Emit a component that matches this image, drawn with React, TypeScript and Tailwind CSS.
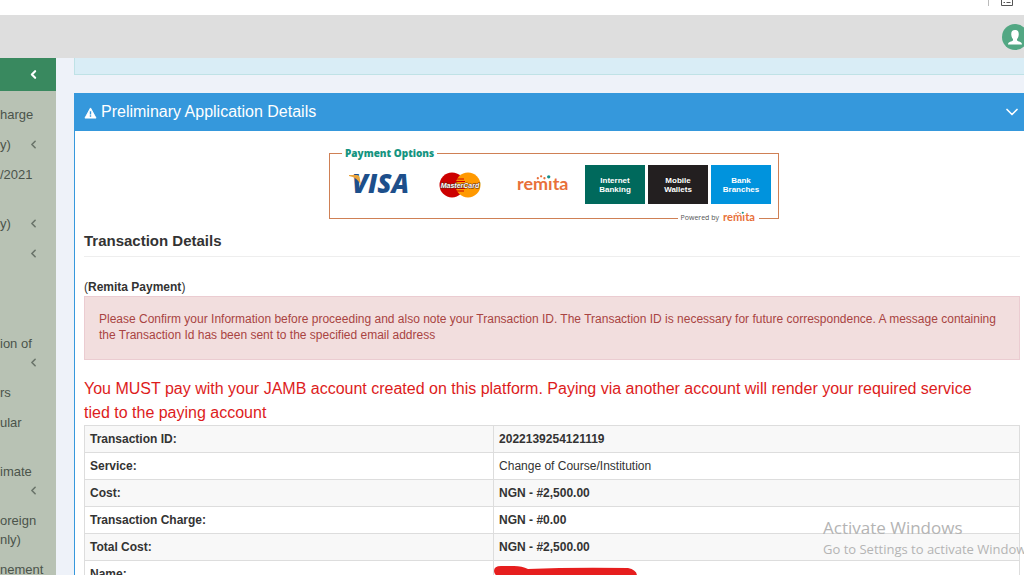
import * as React from "react";
import { ChevronDown, ChevronLeft } from "lucide-react";

const menu = [
  { lines: ["harge"] },
  { lines: ["y)"], arrow: true },
  { lines: ["/2021", ""] },
  { lines: ["y)"], arrow: true },
  { lines: [""], arrow: true },
  { lines: [""] },
  { lines: [""] },
  { lines: ["ion of", ""], arrow: true },
  { lines: ["rs"] },
  { lines: ["ular", ""] },
  { lines: ["imate", ""], arrow: true },
  { lines: ["oreign", "nly)"] },
  { lines: ["nement"] },
];

const details = [
  { label: "Transaction ID:", value: "2022139254121119", bold: true },
  { label: "Service:", value: "Change of Course/Institution", bold: false },
  { label: "Cost:", value: "NGN - #2,500.00", bold: true },
  { label: "Transaction Charge:", value: "NGN - #0.00", bold: true },
  { label: "Total Cost:", value: "NGN - #2,500.00", bold: true },
];

const channels = [
  { top: "Internet", bottom: "Banking", color: "bg-[#00695c]" },
  { top: "Mobile", bottom: "Wallets", color: "bg-[#231f20]" },
  { top: "Bank", bottom: "Branches", color: "bg-[#0093dd]" },
];

const Visa = () => (
  <svg width="64" height="26" viewBox="0 0 64 26" role="img" aria-label="Visa">
    <text
      x="4"
      y="21"
      fill="#1d4f8b"
      fontFamily="Open Sans, sans-serif"
      fontSize="26"
      fontStyle="italic"
      fontWeight="800"
    >
      VISA
    </text>
    <path d="M1 3H9Q11 3 11.500 5L13 13Q9 5 1 4Z" fill="#eaa43c" />
  </svg>
);

const MasterCard = () => (
  <svg width="42" height="26" viewBox="0 0 42 26" role="img" aria-label="MasterCard">
    <circle cx="13" cy="13" r="12.500" fill="#cc0000" />
    <circle cx="29" cy="13" r="12.500" fill="#ff9900" />
    <path d="M17 7H25M16 9.500H26M16 16.500H26M17 19H25" stroke="#cc0000" />
    <text
      x="21"
      y="16"
      textAnchor="middle"
      fill="#fff"
      stroke="#5c2b1a"
      strokeWidth="1"
      paintOrder="stroke"
      fontFamily="Liberation Sans, sans-serif"
      fontSize="7"
      fontStyle="italic"
      fontWeight="700"
    >
      MasterCard
    </text>
  </svg>
);

const Remita = ({ width }: { width: number }) => (
  <svg width={width} viewBox="0 0 56 22" role="img" aria-label="remita">
    <text
      x="0"
      y="17"
      fill="#e8703a"
      fontFamily="Lato, sans-serif"
      fontSize="19"
      fontWeight="700"
    >
      remıta
    </text>
    <g fill="#e8703a">
      <circle cx="22" cy="4.500" r="1.200" />
      <circle cx="25.500" cy="2.500" r="1.200" />
      <circle cx="29" cy="4.500" r="1.200" />
    </g>
    <circle cx="33.500" cy="3" r="1.800" fill="#16908a" />
  </svg>
);

const Payment = () => (
  <div className="relative mx-auto mt-4 w-[450px] max-w-full translate-x-0.5">
    <fieldset className="h-[72px] border border-[#cf8055] pl-3">
      <legend className="px-[3px] font-['Open_Sans',sans-serif] text-[10px] leading-3 font-extrabold text-[#159480]">
        Payment Options
      </legend>
      <div className="flex items-center pt-1.5 pl-1.5">
        <Visa />
        <div className="ml-[27px]">
          <MasterCard />
        </div>
        <div className="ml-9 w-[68px]">
          <Remita width={53} />
        </div>
        <div className="flex gap-[3px]">
          {channels.map((c) => (
            <button
              key={c.top}
              type="button"
              className={`${c.color} h-[39px] w-[60px] text-[8px] leading-[9px] font-bold text-white`}
            >
              {c.top}
              <br />
              {c.bottom}
            </button>
          ))}
        </div>
      </div>
    </fieldset>
    <div className="absolute right-5 -bottom-[5px] flex items-center gap-1 bg-white px-[3px] font-['Open_Sans',sans-serif] text-[7px] leading-3 text-[#555]">
      Powered by
      <Remita width={33} />
    </div>
  </div>
);

const Sidebar = () => (
  <nav className="w-14 shrink-0 overflow-hidden bg-[#b8c2b4] text-[13px] leading-[19px] text-[#4b544b]">
    <button
      type="button"
      aria-label="Collapse menu"
      className="flex h-[33px] w-full items-center justify-end bg-[#39895f] pr-4 text-white"
    >
      <ChevronLeft size={13} strokeWidth={4} />
    </button>
    <ul className="pt-2">
      {menu.map((m, i) => (
        <li key={i} className="relative pt-[6px] pb-[5px]">
          {m.lines.map((line, j) => (
            <div key={j} className="h-[19px] whitespace-nowrap">
              {line}
            </div>
          ))}
          {m.arrow && (
            <ChevronLeft
              size={13}
              strokeWidth={3}
              className="absolute right-4 bottom-2 text-[#6a746a]"
            />
          )}
        </li>
      ))}
    </ul>
  </nav>
);

const Details = () => (
  <table className="w-full border-collapse text-[12px] leading-4 text-[#333]">
    <tbody>
      {details.map((d) => (
        <tr key={d.label} className="h-[27px] odd:bg-[#f8f8f8]">
          <th
            scope="row"
            className="w-7/16 border border-[#dddddd] px-[5px] text-left font-bold"
          >
            {d.label}
          </th>
          <td
            className={`border border-[#dddddd] px-[5px] ${d.bold ? "font-bold" : ""}`}
          >
            {d.value}
          </td>
        </tr>
      ))}
      <tr className="h-[27px]">
        <th
          scope="row"
          className="border border-[#dddddd] px-[5px] text-left font-bold"
        >
          Name:
        </th>
        <td className="border border-[#dddddd]">
          <svg width="143" height="18" viewBox="0 0 143 18">
            <path
              d="M0 6Q0 1 7 1H20Q28 1 34 4Q80 2 134 3Q143 5 143 11V18H16Q0 12 0 6Z"
              fill="#e61e1e"
            />
          </svg>
        </td>
      </tr>
    </tbody>
  </table>
);

export default function App() {
  return (
    <div className="relative flex h-screen flex-col overflow-hidden bg-[#eef2f9] font-['Liberation_Sans',Arial,sans-serif] text-[#333]">
      <div className="flex h-[15px] shrink-0 items-start justify-end gap-3 bg-white pr-[11px]">
        <div className="h-[6px] w-px bg-[#bbb]" />
        <svg width="12" height="6" viewBox="0 0 12 6" fill="none" stroke="#555">
          <path d="M0.500 0V5.500H11.500V0M2.500 2.500H4M5.500 2.500H9.500" />
        </svg>
      </div>
      <header className="flex h-[43px] shrink-0 items-center justify-end bg-[#dedede]">
        <button
          type="button"
          aria-label="Account"
          className="-mr-1 size-[26px] overflow-hidden rounded-full"
        >
          <svg width="26" height="26" viewBox="0 0 26 26">
            <rect width="26" height="26" fill="#52a783" />
            <path
              d="M13 6C10 6 9 8 9.300 11C9.500 13.500 10.500 14.500 11 15.200V16.500C10 17.500 6 17.500 6 20.500H20C20 17.500 16 17.500 15 16.500V15.200C15.500 14.500 16.500 13.500 16.700 11C17 8 16 6 13 6Z"
              fill="#fff"
            />
          </svg>
        </button>
      </header>
      <div className="flex min-h-0 flex-1">
        <Sidebar />
        <main className="min-w-0 flex-1 pl-[18px]">
          <div className="h-[17px] border-b border-l border-[#bfe2e6] bg-[#d9edf6]" />
          <section className="mt-[18px] border-l border-[#3598dc] bg-white">
            <div className="flex h-[38px] items-center bg-[#3598dc] pr-0.5 pl-[9px] text-white">
              <svg width="13" height="12" viewBox="0 0 14 13" className="mt-0.5">
                <path
                  d="M7 1L13 12H1Z"
                  fill="#fff"
                  stroke="#fff"
                  strokeLinejoin="round"
                />
                <path d="M7 4.500V8M7 9V10.500" stroke="#3598dc" strokeWidth="1.500" />
              </svg>
              <h1 className="ml-1 text-[16px]">Preliminary Application Details</h1>
              <button type="button" aria-label="Toggle panel" className="ml-auto">
                <ChevronDown size={20} />
              </button>
            </div>
            <div className="pr-1 pl-[9px]">
              <Payment />
              <h2 className="mt-3 border-b border-[#eeeeee] pb-[5px] text-[15px] leading-5 font-bold">
                Transaction Details
              </h2>
              <p className="mt-[22px] pb-px text-[12px] leading-4">
                (<b>Remita Payment</b>)
              </p>
              <div className="border border-[#ebccd1] bg-[#f2dede] px-[14px] pt-[14px] pb-4 text-[12px] leading-4 text-[#a94442]">
                Please Confirm your Information before proceeding and also note
                your Transaction ID. The Transaction ID is necessary for future
                correspondence. A message containing the Transaction Id has been
                sent to the specified email address
              </div>
              <p className="mt-[17px] pr-6 text-[16px] leading-6 text-[#dd1c1c]">
                You MUST pay with your JAMB account created on this platform.
                Paying via another account will render your required service tied
                to the paying account
              </p>
              <Details />
            </div>
          </section>
        </main>
      </div>
      <div className="pointer-events-none absolute bottom-4 left-[823px] font-['Open_Sans',sans-serif] whitespace-nowrap text-[#b4b4b4]">
        <div className="text-[17px] leading-[22px]">Activate Windows</div>
        <div className="text-[13px] leading-5">
          Go to Settings to activate Windows.
        </div>
      </div>
    </div>
  );
}
